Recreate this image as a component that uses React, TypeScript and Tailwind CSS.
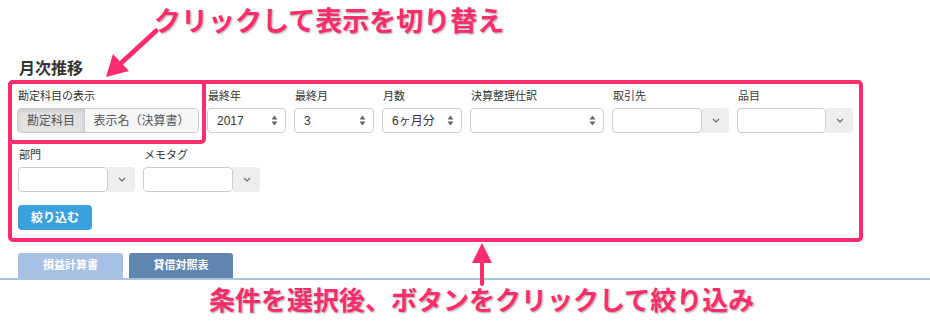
import React from 'react';

const PINK = '#fb2d6c';

const SelectArrows = () => (
  <svg width="7" height="11" viewBox="0 0 7 11" className="shrink-0">
    <path d="M3.5 0.5 L6.5 4.5 L0.5 4.5 Z" fill="#666" />
    <path d="M3.5 10.5 L6.5 6.5 L0.5 6.5 Z" fill="#666" />
  </svg>
);

const Chevron = () => (
  <svg width="8" height="5" viewBox="0 0 8 5">
    <path d="M1 1 L4 4 L7 1" fill="none" stroke="#666" strokeWidth="1.1" />
  </svg>
);

const Field = ({ label, width, children }: { label: string; width: string; children: React.ReactNode }) => (
  <div className={`flex flex-col ${width}`}>
    <div className="h-[14px] text-[11px] leading-[14px] text-[#333] pl-[1px] whitespace-nowrap">{label}</div>
    <div className="mt-[5px] h-[25px]">{children}</div>
  </div>
);

const Select = ({ value }: { value: string }) => (
  <div className="flex items-center justify-between h-full border border-[#ccc] rounded-[4px] bg-white pl-[9px] pr-[7px] text-[12px] text-[#333]">
    <span>{value}</span>
    <SelectArrows />
  </div>
);

const Combo = () => (
  <div className="flex h-full">
    <div className="flex-1 border border-[#ccc] rounded-[4px] bg-white" />
    <div className="w-[27px] flex items-center justify-center bg-[#eee] rounded-r-[4px]">
      <Chevron />
    </div>
  </div>
);

const App = () => {
  return (
    <div className="relative w-[930px] h-[324px] bg-white overflow-hidden pt-[59px] font-['Liberation_Sans','Noto_Sans_CJK_JP',sans-serif]">
      <h2 className="pl-[19px] text-[16px] font-bold leading-[20px] text-[#333]">月次推移</h2>

      <div className="mt-[10px] pl-[17px]">
        <div className="flex gap-[8px]">
          <Field label="勘定科目の表示" width="w-[182px]">
            <div className="flex h-full border border-[#ccc] rounded-[4px] overflow-hidden text-[12px] text-[#555]">
              <div className="w-[67px] flex items-center justify-center bg-[#e2e2e2] shadow-[inset_0_2px_4px_rgba(0,0,0,0.12)] border-r border-[#ccc]">勘定科目</div>
              <div className="flex-1 flex items-center justify-center bg-[#f6f6f6]">表示名（決算書）</div>
            </div>
          </Field>
          <Field label="最終年" width="w-[79px]"><Select value="2017" /></Field>
          <Field label="最終月" width="w-[80px]"><Select value="3" /></Field>
          <Field label="月数" width="w-[80px]"><Select value="6ヶ月分" /></Field>
          <Field label="決算整理仕訳" width="w-[134px]"><Select value="" /></Field>
          <Field label="取引先" width="w-[117px]"><Combo /></Field>
          <Field label="品目" width="w-[116px]"><Combo /></Field>
        </div>

        <div className="flex gap-[8px] mt-[15px] pl-[1px]">
          <Field label="部門" width="w-[117px]"><Combo /></Field>
          <Field label="メモタグ" width="w-[117px]"><Combo /></Field>
        </div>

        <button className="mt-[13px] ml-[1px] h-[25px] w-[74px] rounded-[4px] bg-[#3ba1dd] text-white text-[12px] font-bold">
          絞り込む
        </button>
      </div>

      <div className="mt-[23px] flex gap-[6px] pl-[18px] border-b-2 border-[#a9c4e0]">
        <div className="w-[105px] h-[25px] flex items-center justify-center rounded-t-[3px] bg-[#a6c1e4] text-white text-[11px] font-bold">損益計算書</div>
        <div className="w-[104px] h-[25px] flex items-center justify-center rounded-t-[3px] bg-[#5f86b1] text-white text-[11px] font-bold">貸借対照表</div>
      </div>

      {/* annotation frames */}
      <div className="absolute left-[8px] top-[80px] w-[855px] h-[162px] border-4 rounded-[5px] pointer-events-none" style={{ borderColor: PINK }} />
      <div className="absolute left-[8px] top-[80px] w-[198px] h-[64px] border-4 rounded-[5px] pointer-events-none" style={{ borderColor: PINK }} />

      {/* arrows */}
      <svg className="absolute inset-0 pointer-events-none" width="930" height="324">
        <line x1="156" y1="31" x2="119" y2="65" stroke={PINK} strokeWidth="5" strokeLinecap="round" />
        <polygon points="106,77 129,71 113,54" fill={PINK} />
        <line x1="482" y1="260" x2="482" y2="284" stroke={PINK} strokeWidth="4" strokeLinecap="round" />
        <polygon points="482,243 492,263 472,263" fill={PINK} />
      </svg>

      <div className="absolute left-[154px] top-[5px] text-[27px] leading-[34px] font-bold text-[#fb2d6c] [text-shadow:1px_1px_2px_rgba(0,0,0,0.35)] whitespace-nowrap">
        クリックして表示を切り替え
      </div>
      <div className="absolute left-[209px] top-[284px] text-[26px] leading-[34px] font-bold text-[#fb2d6c] [text-shadow:1px_1px_2px_rgba(0,0,0,0.35)] whitespace-nowrap">
        条件を選択後、ボタンをクリックして絞り込み
      </div>
    </div>
  );
};

export default App;
